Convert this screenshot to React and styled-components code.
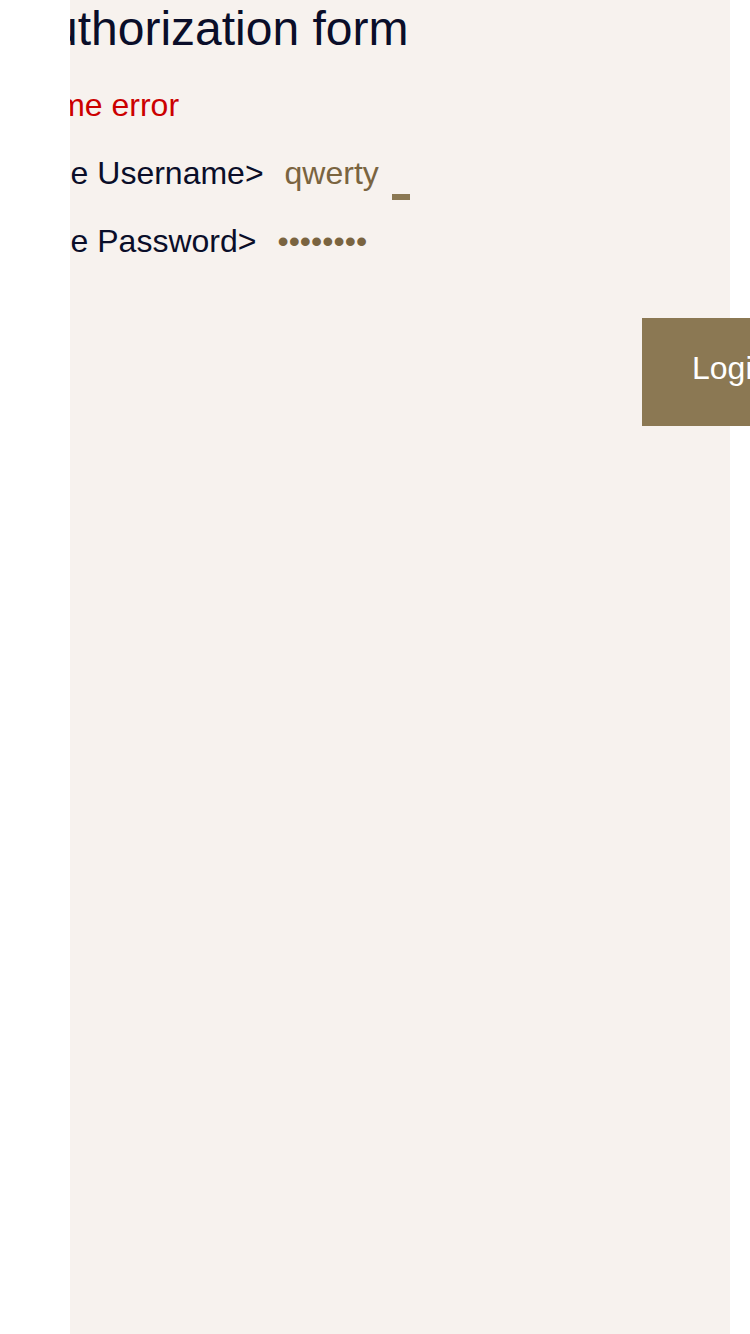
import React from 'react';
import styled, { createGlobalStyle } from 'styled-components';

const GlobalStyle = createGlobalStyle`
  html, body {
    margin: 0;
    padding: 0;
    background: #ffffff;
    overflow-x: hidden;
  }
  body {
    font-family: "Liberation Sans", Arial, sans-serif;
  }
`;

const Panel = styled.main`
  margin-left: 70px;
  width: 660px;
  min-height: 100vh;
  background: #f7f2ee;
  clip-path: inset(0 -200px 0 0);
`;

const Form = styled.form`
  margin-left: -51px;
  display: flex;
  flex-direction: column;
`;

const Title = styled.h1`
  margin: 0 0 13px;
  font-size: 48px;
  line-height: 58px;
  font-weight: 400;
  color: #0a0e29;
  white-space: nowrap;
`;

const Line = styled.div`
  display: flex;
  align-items: baseline;
  gap: 21px;
  font-size: 32px;
  line-height: 68px;
  white-space: nowrap;
  color: ${(p) => (p.$error ? '#cc0000' : '#0a0e29')};
`;

const Value = styled.span`
  color: #7a6440;
`;

const Cursor = styled.span`
  display: inline-block;
  width: 18px;
  height: 6px;
  margin-left: -8px;
  margin-top: 55px;
  align-self: flex-start;
  background: #8b7853;
`;

const ButtonRow = styled.div`
  margin-top: 43px;
  padding-left: 623px;
`;

const LoginButton = styled.button`
  border: none;
  background: #8b7853;
  color: #ffffff;
  font-family: inherit;
  font-size: 32px;
  line-height: 100px;
  padding: 0 50px 8px;
  cursor: pointer;
  white-space: nowrap;
`;

export default function App() {
  return (
    <>
      <GlobalStyle />
      <Panel>
        <Form onSubmit={(e) => e.preventDefault()}>
          <Title>Authorization form</Title>
          <Line $error>Some error</Line>
          <Line>
            <span>Type Username&gt;</span>
            <Value>qwerty</Value>
            <Cursor />
          </Line>
          <Line>
            <span>Type Password&gt;</span>
            <Value>••••••••</Value>
          </Line>
          <ButtonRow>
            <LoginButton type="submit">Login</LoginButton>
          </ButtonRow>
        </Form>
      </Panel>
    </>
  );
}
